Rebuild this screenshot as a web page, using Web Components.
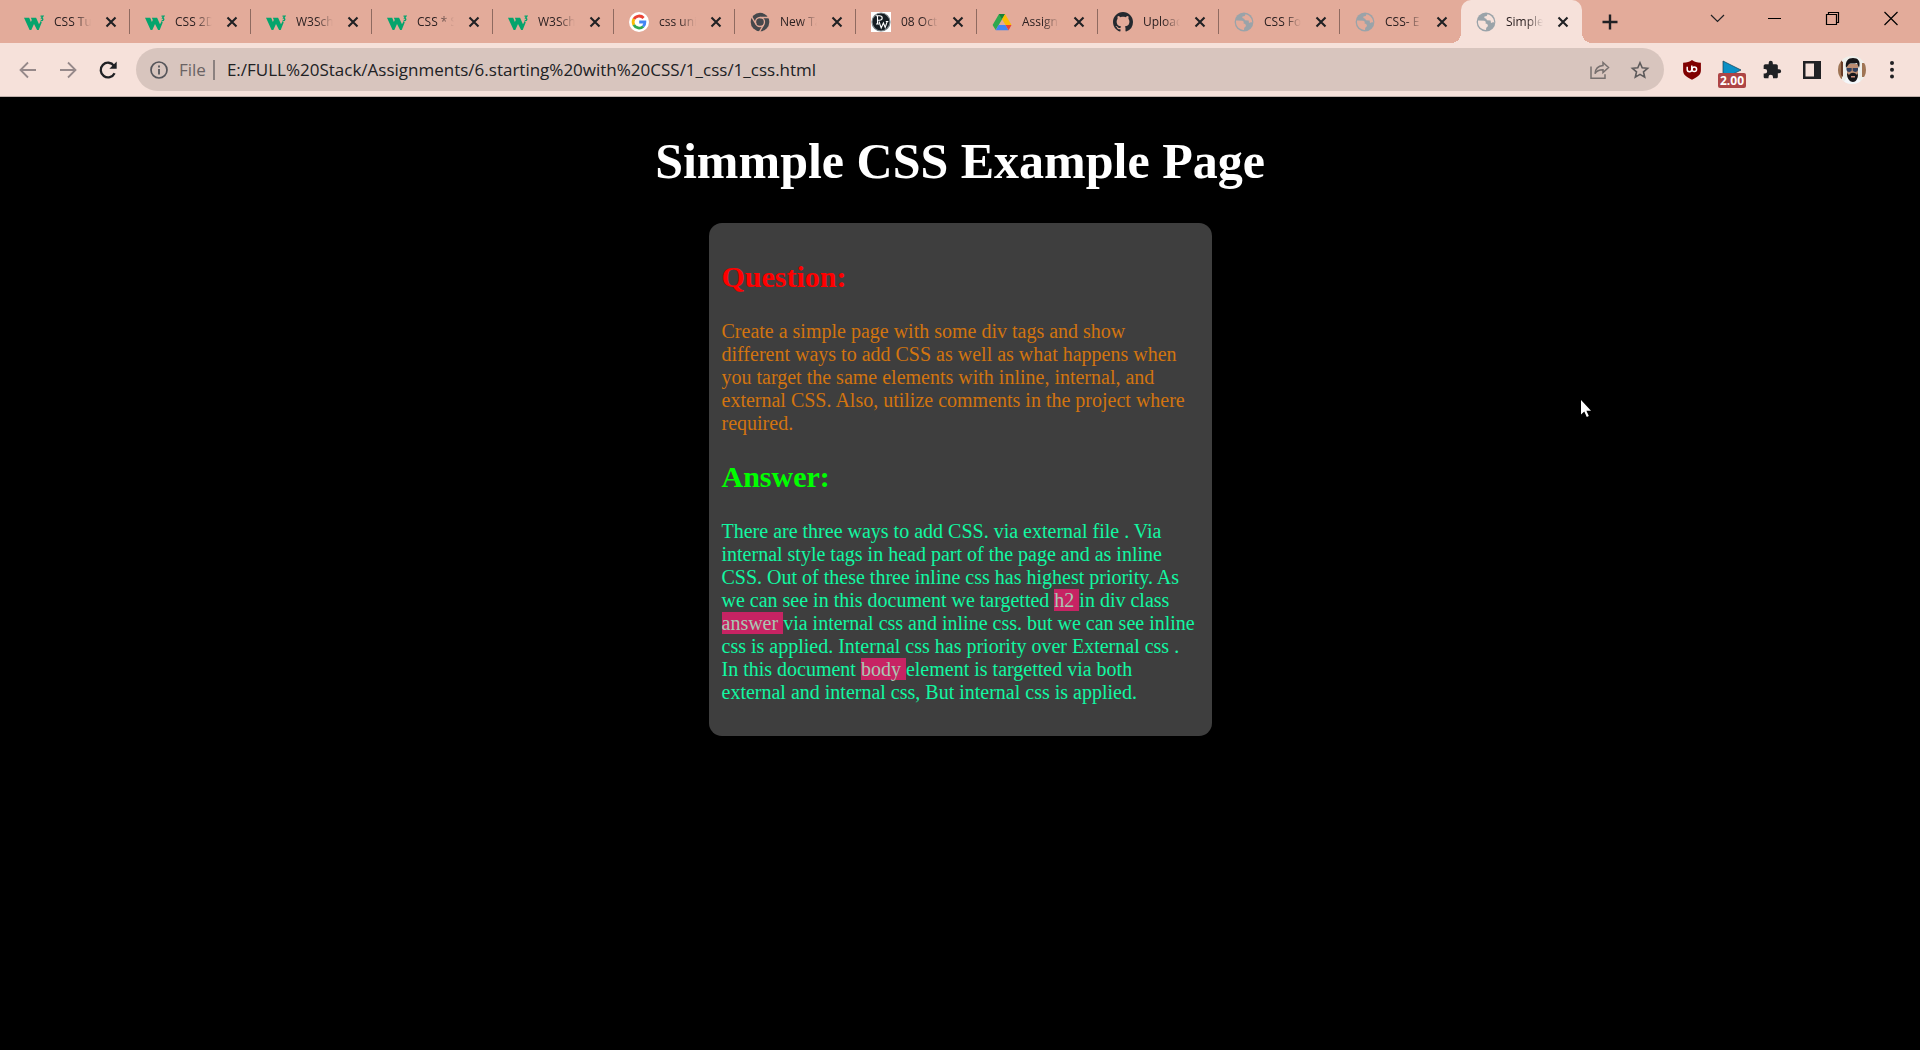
<!DOCTYPE html>
<html lang="en">
<head>
<meta charset="utf-8">
<title>Simmple CSS Example Page</title>
<style>
  html, body { height: 100%; margin: 0; background: #000; }
  body { font-family: "Open Sans", "Noto Sans", sans-serif; color: #202124; }
</style>
</head>
<body>
<browser-window>
  <tab-strip slot="tabs">
    <browser-tab icon="w3">CSS Tu</browser-tab>
    <browser-tab icon="w3">CSS 2D</browser-tab>
    <browser-tab icon="w3">W3Sch</browser-tab>
    <browser-tab icon="w3">CSS * S</browser-tab>
    <browser-tab icon="w3">W3Sch</browser-tab>
    <browser-tab icon="google">css uni</browser-tab>
    <browser-tab icon="chrome">New Ta</browser-tab>
    <browser-tab icon="pw">08 Oct</browser-tab>
    <browser-tab icon="drive">Assign</browser-tab>
    <browser-tab icon="github">Upload</browser-tab>
    <browser-tab icon="globe">CSS Fo</browser-tab>
    <browser-tab icon="globe" last>CSS- E</browser-tab>
    <browser-tab icon="globe" active>Simple</browser-tab>
  </tab-strip>
  <tool-bar slot="toolbar"></tool-bar>
  <css-page>
    <span slot="title">Simmple CSS Example Page</span>
    <qa-section style="--head:#ff0000;--text:#d2740f">
      <span slot="heading">Question:</span>
      Create a simple page with some div tags and show different ways to add CSS as well as what happens when you target the same elements with inline, internal, and external CSS. Also, utilize comments in the project where required.
    </qa-section>
    <qa-section style="--head:#00ff00;--text:#12f8a2">
      <span slot="heading">Answer:</span>
      There are three ways to add CSS. via external file . Via internal style tags in head part of the page and as inline CSS. Out of these three inline css has highest priority. As we can see in this document we targetted <mark-term>h2 </mark-term>in div class <mark-term>answer </mark-term>via internal css and inline css. but we can see inline css is applied. Internal css has priority over External css . In this document <mark-term>body </mark-term>element is targetted via both external and internal css, But internal css is applied.
    </qa-section>
  </css-page>
</browser-window>

<script>
const ICONS = {
  w3: `<svg viewBox="0 0 20 20"><path fill="#04a46c" d="M0 5.800h5.200l1.700 4.200.9-2-.9-2.200h5.200l2.900 6.500 1.700-3.300 1 1.500-3 7.500h-1.600l-3.100-6-2.700 6H5.600z"/><path fill="none" stroke="#04a46c" stroke-width="1.300" d="M16.500 4.200h2.400l-1.300 1.900c1.700.2 1.700 2.800-.9 2.400"/></svg>`,
  google: `<svg viewBox="0 0 20 20"><circle cx="10" cy="10" r="10" fill="#fff"/><g fill="none" stroke-width="2.800"><path stroke="#ea4335" d="M4.900 7.100A6 6 0 0 1 14.600 6"/><path stroke="#fbbc05" d="M4.900 13A6.300 6.300 0 0 1 4.900 7"/><path stroke="#34a853" d="M4.800 12.900a6 6 0 0 0 9.400 1.500"/><path stroke="#4285f4" d="M10.200 10h5.700c.1 1.800-.6 3.400-1.800 4.500"/></g></svg>`,
  chrome: `<svg viewBox="0 0 20 20"><circle cx="10" cy="10" r="9.300" fill="#46484c"/><g fill="none" stroke="#e3ab9a" stroke-width="1.300"><circle cx="10" cy="10" r="4.500"/><path d="M10 5.500h9M6.100 12.300 1.600 4.700M13.900 12.300l-4.500 7.600"/></g><circle cx="10" cy="10" r="2.900" fill="#46484c"/></svg>`,
  pw: `<svg viewBox="0 0 20 20"><path fill="#fff" d="M0 0h20v20H0z"/><circle cx="10" cy="10" r="9" fill="#151d22" stroke="#7d8589" stroke-width="1.200"/><path fill="none" stroke="#fff" stroke-width="1.100" d="M6.500 12V3.800M4.800 3.800h3.700c3.600 0 3.600 4.400 0 4.400h-2M5 12h3M8 9.500l2.200 6.500 2.200-5 1.800 4.500 2-6M14.800 9.500h2.500"/></svg>`,
  drive: `<svg viewBox="0 0 20 20"><path fill="#2fa84f" d="M7 2h6l-2.900 5.200L3.700 18 .6 13z"/><path fill="#188038" d="M7 2h6l-3 5.200z"/><path fill="#fbbc04" d="M13 2l6.500 11h-6L10 7.200z"/><path fill="#4285f4" d="M6.500 13h7l3.100 5.300H3.700z"/><path fill="#ea4335" d="M13.500 13h6l-2.900 5.300z"/></svg>`,
  github: `<svg viewBox="0 0 16 16"><path fill="#24292f" d="M8 0C3.580 0 0 3.580 0 8c0 3.540 2.290 6.530 5.470 7.590.4.070.55-.17.55-.38 0-.19-.01-.82-.01-1.490-2.010.37-2.530-.49-2.690-.94-.09-.23-.48-.94-.82-1.130-.28-.15-.68-.52-.01-.53.63-.01 1.080.58 1.230.82.72 1.210 1.870.87 2.330.66.07-.52.28-.87.51-1.070-1.780-.2-3.640-.89-3.640-3.950 0-.87.31-1.590.82-2.150-.08-.2-.36-1.020.08-2.120 0 0 .67-.21 2.200.82.64-.18 1.320-.27 2-.27s1.360.09 2 .27c1.530-1.040 2.200-.82 2.200-.82.44 1.100.16 1.920.08 2.120.51.56.82 1.270.82 2.150 0 3.070-1.870 3.750-3.650 3.950.29.25.54.73.54 1.480 0 1.070-.01 1.930-.01 2.200 0 .21.15.46.55.38A8.010 8.010 0 0 0 16 8c0-4.420-3.580-8-8-8z"/></svg>`,
  globe: `<svg viewBox="0 0 20 20"><circle cx="10" cy="10" r="9.400" fill="#9aa3a9"/><path fill="var(--land,#e3ab9a)" d="M2 8.500l6.300.2c1.500.2 1.700 1.800 1.200 2.800 1.600.1 2.500.9 2.400 2.400-.1 1-1.500 1-1.700 2l-.2 2.100C5.700 18 2 14.500 2 10.300zM11.500 2.200l-.8 1.700-2.200.5c-.8 1 .5 2.300 1.500 2.200l1 1.700 3.600.3c.5.900-.3 2 .8 2.300l1.900-.8.900.8c.2-3.800-2.200-7.400-6.700-8.700z"/></svg>`,
  close: `<svg viewBox="0 0 20 20"><path fill="none" stroke="#202124" stroke-width="2.100" d="M5.500 5.500l9 9m0-9l-9 9"/></svg>`,
  plus: `<svg viewBox="0 0 20 20"><path fill="none" stroke="#202124" stroke-width="2.400" d="M10 2.500v15M2.500 10h15"/></svg>`,
  chevron: `<svg viewBox="0 0 20 20"><path fill="none" stroke="#202124" stroke-width="1.200" d="M4 7l6.500 6.500L17 7"/></svg>`,
  minimize: `<svg viewBox="0 0 20 20"><path fill="#000" d="M3 10h13v1H3z"/></svg>`,
  maximize: `<svg viewBox="0 0 20 20"><path fill="none" stroke="#000" stroke-width="1.200" d="M3.500 6.500h10v10h-10zM5.500 6.500v-2h10v10h-2"/></svg>`,
  exit: `<svg viewBox="0 0 20 20"><path fill="none" stroke="#000" stroke-width="1.200" d="M3.500 4l13 13m0-13l-13 13"/></svg>`,
  back: `<svg viewBox="0 0 20 20"><path fill="none" stroke="#96898a" stroke-width="1.800" d="M18 10H3M10 2.500L2.500 10l7.500 7.500"/></svg>`,
  forward: `<svg viewBox="0 0 20 20"><path fill="none" stroke="#96898a" stroke-width="1.800" d="M2 10h15M10 2.500l7.500 7.500-7.500 7.500"/></svg>`,
  reload: `<svg viewBox="0 0 20 20"><path fill="none" stroke="#202124" stroke-width="2.300" d="M16.600 13.200A7.300 7.300 0 1 1 16 5.800"/><path fill="#202124" d="M18.700 1.500v7.300h-7.300z"/></svg>`,
  info: `<svg viewBox="0 0 20 20"><circle cx="10" cy="10" r="8" fill="none" stroke="#55555a" stroke-width="1.700"/><path fill="#55555a" d="M9.100 5.600h1.800v1.800H9.100zM9.100 9h1.800v5.400H9.100z"/></svg>`,
  share: `<svg viewBox="0 0 20 20"><g fill="none" stroke="#77706f" stroke-width="1.500"><path d="M1 6.500v11.700h14v-4"/><path d="M13 2.500l5.500 5-5.500 5V9.700c-4 0-6.600 1.300-8 4 .3-4.500 3-7.800 8-8.200z"/></g></svg>`,
  star: `<svg viewBox="0 0 20 20"><path fill="none" stroke="#5e5b5c" stroke-width="1.600" d="M10 2.800l2.200 5 5.400.5-4.100 3.600 1.200 5.300L10 14.400l-4.700 2.800 1.200-5.300-4.100-3.600 5.400-.5z"/></svg>`,
  shield: `<svg viewBox="0 0 20 20"><path fill="#800000" d="M10 0c2.500 1.800 5 2.600 8.900 2.700v7.800c0 4.300-3.600 6.700-8.900 9.300-5.300-2.600-8.900-5-8.900-9.300V2.700C5 2.600 7.500 1.800 10 0z"/><path fill="none" stroke="#fff" stroke-width="1.500" d="M5.200 6.800v2.700c0 2.900 4.600 2.900 4.600 0V5.500"/><circle cx="12.300" cy="9.300" r="2.300" fill="none" stroke="#fff" stroke-width="1.500"/></svg>`,
  play: `<svg viewBox="0 0 20 20"><path fill="#0b8fc4" stroke="#123c50" stroke-width=".7" d="M1 1l18 9L1 19z"/></svg>`,
  puzzle: `<svg viewBox="0 0 24 24"><path fill="#202124" d="M20.500 11H19V7c0-1.100-.9-2-2-2h-4V3.500a2.500 2.500 0 0 0-5 0V5H4c-1.100 0-2 .9-2 2v3.800h1.500a2.700 2.700 0 0 1 0 5.400H2V20c0 1.100.9 2 2 2h3.800v-1.500a2.700 2.700 0 0 1 5.400 0V22H17c1.100 0 2-.9 2-2v-4h1.500a2.500 2.500 0 0 0 0-5z"/></svg>`,
  panel: `<svg viewBox="0 0 20 20"><path fill="#202124" fill-rule="evenodd" d="M1 1h18v18H1zM3.500 3.500v13h8.500v-13z"/></svg>`,
  menu: `<svg viewBox="0 0 20 20"><g fill="#202124"><circle cx="10" cy="3" r="2"/><circle cx="10" cy="9.800" r="2"/><circle cx="10" cy="16.500" r="2"/></g></svg>`,
  avatar: `<svg viewBox="0 0 28 28"><clipPath id="c"><circle cx="14" cy="14" r="14"/></clipPath><g clip-path="url(#c)"><path fill="#eeefeb" d="M0 0h28v28H0z"/><path fill="#a07555" d="M0 6l4-3v20l-4-1zM24 7h4v14h-4z"/><path fill="#6a3d27" d="M3 5l2 1v15l-2-2z"/><path fill="#f4f7fa" d="M5 28l4-7 6 3 5-2 5 6z"/><path fill="#bd8e73" d="M9 8h11v10c0 5-3 7-5 7s-6-2-6-7z"/><path fill="#171619" d="M8 12C7 5 10 2 15 2s8 3 6 10l-2-5c-3 1-6 0-8 1zM9 17l2 2c2-3 6-3 8 0l1-2c0 6-2 9-5 9s-6-3-6-9z"/><path fill="#32405e" d="M8.500 12h5.200v2.500c-1 2-4.500 2-5.200-.5zM14.700 12H20v2c-.7 2.500-4.300 2.500-5.300.5z"/><path fill="#c88b79" d="M13 20h4v1.500h-4z"/></g></svg>`,
  cursor: `<svg viewBox="0 0 12 18"><path fill="#fff" d="M0 0v14.500l3.300-3 2.500 5.500 2-.9-2.400-5.300H10z"/></svg>`
};

class BaseElement extends HTMLElement {
  constructor() {
    super();
    this.attachShadow({ mode: "open" });
  }
  connectedCallback() {
    this.shadowRoot.innerHTML = `<style>:host,*{box-sizing:border-box}${this.styles()}</style>${this.markup()}`;
  }
}

customElements.define("ui-icon", class extends BaseElement {
  styles() { return `:host{display:block;flex:none;width:20px;height:20px}svg{display:block;width:100%;height:100%}`; }
  markup() { return ICONS[this.getAttribute("name")]; }
});

customElements.define("icon-button", class extends BaseElement {
  styles() {
    return `:host{display:flex;flex:none;width:40px;height:40px}
      button{display:flex;flex:1;align-items:center;justify-content:center;padding:0;border:0;background:none;font:inherit}
      ui-icon{width:var(--size,20px);height:var(--size,20px)}`;
  }
  markup() {
    return `<button type="button" aria-label="${this.getAttribute("label")}"><ui-icon name="${this.getAttribute("icon")}"></ui-icon></button>`;
  }
});

customElements.define("browser-window", class extends BaseElement {
  styles() {
    return `:host{display:flex;flex-direction:column;min-height:100vh}
      header{background:#e3ab9a}main{flex:1;display:flex;flex-direction:column}`;
  }
  markup() { return `<header><slot name="tabs"></slot><slot name="toolbar"></slot></header><main><slot></slot></main>`; }
});

customElements.define("tab-strip", class extends BaseElement {
  styles() {
    return `:host{display:flex;height:43px;padding-left:9px;align-items:stretch}
      .new{width:56px;height:43px}
      .window{display:flex;margin-left:auto}
      .window icon-button{width:58px;height:36px}`;
  }
  markup() {
    return `<slot></slot><icon-button class="new" icon="plus" label="New tab"></icon-button>
      <div class="window">
        <icon-button icon="chevron" label="Search tabs"></icon-button>
        <icon-button icon="minimize" label="Minimize"></icon-button>
        <icon-button icon="maximize" label="Restore"></icon-button>
        <icon-button icon="exit" label="Close"></icon-button>
      </div>`;
  }
});

customElements.define("browser-tab", class extends BaseElement {
  styles() {
    return `:host{display:flex;position:relative;flex:0 1 121px;min-width:0;align-items:center;padding:0 9px 0 15px}
      :host::after{content:"";position:absolute;right:0;top:9px;width:1px;height:25px;background:#8f6a60}
      :host([last])::after{display:none}
      :host([active]){background:#f6e1da;border-radius:10px 10px 0 0;--land:#f6e1da}
      :host([active])::before,:host([active])::after{content:"";position:absolute;top:auto;bottom:0;width:10px;height:10px}
      :host([active])::before{left:-10px;background:radial-gradient(circle at 0 0,transparent 10px,#f6e1da 10px)}
      :host([active])::after{right:-10px;background:radial-gradient(circle at 100% 0,transparent 10px,#f6e1da 10px)}
      .title{flex:1;min-width:0;display:flex;align-items:center;gap:10px;padding:0;border:0;background:none;font:inherit;font-size:12px;line-height:20px;color:#2b2021;text-align:left}
      .text{flex:1;min-width:0;overflow:hidden;white-space:nowrap;-webkit-mask-image:linear-gradient(90deg,#000 55%,transparent);mask-image:linear-gradient(90deg,#000 55%,transparent)}
      icon-button{width:20px;height:20px;margin-left:10px}`;
  }
  markup() {
    return `<button class="title" type="button"><ui-icon name="${this.getAttribute("icon")}"></ui-icon><span class="text"><slot></slot></span></button>
      <icon-button icon="close" label="Close tab"></icon-button>`;
  }
});

customElements.define("tool-bar", class extends BaseElement {
  styles() {
    return `:host{display:flex;align-items:center;height:54px;padding:0 8px;background:#f6e1da;border-bottom:1px solid #bfb0ab}
      url-bar{flex:1;margin:0 8px}
      .avatar{--size:28px}`;
  }
  markup() {
    return `<icon-button icon="back" label="Back"></icon-button>
      <icon-button icon="forward" label="Forward"></icon-button>
      <icon-button icon="reload" label="Reload"></icon-button>
      <url-bar></url-bar>
      <icon-button icon="shield" label="Content blocker"></icon-button>
      <speed-badge>2.00</speed-badge>
      <icon-button icon="puzzle" label="Extensions"></icon-button>
      <icon-button icon="panel" label="Side panel"></icon-button>
      <icon-button class="avatar" icon="avatar" label="Profile"></icon-button>
      <icon-button icon="menu" label="Menu"></icon-button>`;
  }
});

customElements.define("url-bar", class extends BaseElement {
  styles() {
    return `:host{display:flex;align-items:center;height:43px;padding:0 4px 0 13px;border-radius:22px;background:#d8c5be;font-size:17px}
      label{display:flex;align-items:center;gap:10px;color:#6a6364}
      .rule{width:2px;height:20px;margin:0 12px 0 7px;background:#8b8180}
      input{flex:1;min-width:0;height:30px;padding:0;border:0;outline:0;background:none;font:inherit;color:#202124}`;
  }
  markup() {
    return `<label for="url"><ui-icon name="info"></ui-icon>File</label><span class="rule"></span>
      <input id="url" type="text" value="E:/FULL%20Stack/Assignments/6.starting%20with%20CSS/1_css/1_css.html" spellcheck="false">
      <icon-button icon="share" label="Share"></icon-button>
      <icon-button icon="star" label="Bookmark"></icon-button>`;
  }
});

customElements.define("speed-badge", class extends BaseElement {
  styles() {
    return `:host{display:block;flex:none;width:40px;height:40px}
      button{position:relative;display:flex;align-items:center;justify-content:center;width:100%;height:100%;padding:0;border:0;background:none;font:inherit}
      span{position:absolute;left:6px;bottom:2px;width:28px;border-radius:2px;background:#ae4545;color:#fff;font-size:12px;font-weight:700;line-height:15px;text-align:center}`;
  }
  markup() { return `<button type="button"><ui-icon name="play"></ui-icon><span><slot></slot></span></button>`; }
});

customElements.define("css-page", class extends BaseElement {
  styles() {
    return `:host{display:block;position:relative;flex:1;background:#000;font-family:"Liberation Serif","Times New Roman",serif;font-size:20px;line-height:23px}
      h1{margin:35px 0 33px;color:#fff;font-size:50px;line-height:58px;text-align:center}
      article{width:503px;max-width:100%;margin:0 auto;padding:12px 16px 12px 13px;border-radius:13px;background:#3e3e3e;display:flow-root}
      ui-icon{position:absolute;left:1581px;top:303px;width:12px;height:18px}`;
  }
  markup() { return `<h1><slot name="title"></slot></h1><article><slot></slot></article><ui-icon name="cursor"></ui-icon>`; }
});

customElements.define("qa-section", class extends BaseElement {
  styles() {
    return `:host{display:block}
      h2{margin:25px 0 26px;color:var(--head);font-size:30px;line-height:34px}
      p{margin:20px 0;color:var(--text)}`;
  }
  markup() { return `<h2><slot name="heading"></slot></h2><p><slot></slot></p>`; }
});

customElements.define("mark-term", class extends BaseElement {
  styles() { return `:host{display:inline}span{background:#c72363;color:#a9c8b4}`; }
  markup() { return `<span><slot></slot></span>`; }
});
</script>
</body>
</html>
